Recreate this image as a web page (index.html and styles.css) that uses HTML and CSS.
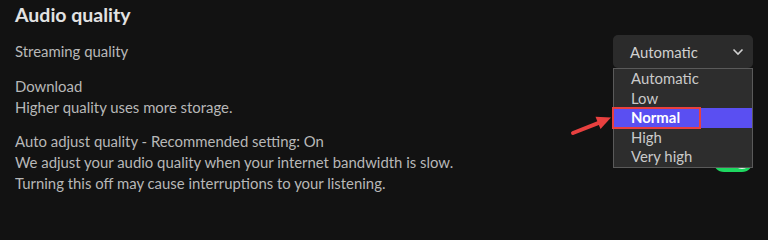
FILE: index.html
```html
<!DOCTYPE html>
<html>
<head>
<meta charset="utf-8">
<link rel="stylesheet" href="styles.css">
</head>
<body>
<div class="page">
  <h2 class="title">Audio quality</h2>
  <div class="row row-stream">
    <div class="label">Streaming quality</div>
    <div class="select-wrap">
      <div class="select">
        <span>Automatic</span>
        <svg class="chev" width="12" height="8" viewBox="0 0 12 8"><path d="M1.5 1.5 L6 6 L10.5 1.5" fill="none" stroke="#d0d0d0" stroke-width="1.6"/></svg>
      </div>
      <ul class="list">
        <li>Automatic</li>
        <li>Low</li>
        <li class="sel">Normal</li>
        <li>High</li>
        <li>Very high</li>
      </ul>
      <div class="redbox"></div>
      <svg class="arrow" width="50" height="32" viewBox="0 0 50 32">
        <path d="M8 28 L35 17.3" stroke="#e8403f" stroke-width="4" stroke-linecap="round" fill="none"/>
        <path d="M46 12.5 L30.5 11.8 L35.5 24 Z" fill="#e8403f"/>
      </svg>
    </div>
  </div>
  <div class="block block-dl">
    <div class="label">Download</div>
    <div class="label">Higher quality uses more storage.</div>
  </div>
  <div class="row row-auto">
    <div class="block">
      <div class="label">Auto adjust quality - Recommended setting: On</div>
      <div class="label">We adjust your audio quality when your internet bandwidth is slow.</div>
      <div class="label">Turning this off may cause interruptions to your listening.</div>
    </div>
    <div class="toggle"><span class="knob"></span></div>
  </div>
</div>
</body>
</html>
```
FILE: styles.css
```css
html, body {
  margin: 0;
  padding: 0;
  background: #121212;
  width: 768px;
  height: 201px;
  overflow: hidden;
}
.page {
  padding: 3px 15px 0 15px;
  font-family: "Lato", "Liberation Sans", sans-serif;
  color: #b8b8b8;
}
.title {
  margin: 0;
  font-size: 19.5px;
  line-height: 24px;
  font-weight: 700;
  color: #e2e2e2;
}
.label {
  font-size: 14.9px;
  line-height: 21px;
}
.row {
  display: flex;
  justify-content: space-between;
  align-items: center;
}
.row-stream {
  margin-top: 8px;
  height: 33px;
}
.select-wrap {
  position: relative;
  width: 140px;
  height: 33px;
}
.select {
  box-sizing: border-box;
  height: 33px;
  background: #2b2b2b;
  border-radius: 5px;
  display: flex;
  align-items: center;
  justify-content: space-between;
  padding: 0 9px 0 17px;
  font-size: 14.9px;
  color: #d0d0d0;
}
.list {
  position: absolute;
  left: 0;
  top: 33px;
  width: 140px;
  box-sizing: border-box;
  margin: 0;
  padding: 0;
  list-style: none;
  background: #2d2d2d;
  border: 1px solid #5a5a5a;
  z-index: 2;
}
.list li {
  height: 19.5px;
  line-height: 19.5px;
  padding-left: 17px;
  font-size: 14.9px;
  color: #cacaca;
}
.list li.sel {
  background: #5a4ff2;
  color: #ffffff;
  font-weight: 700;
}
.redbox {
  position: absolute;
  left: -1px;
  top: 72px;
  width: 89px;
  height: 22px;
  box-sizing: border-box;
  border: 2.5px solid #e8403f;
  z-index: 3;
}
.arrow {
  position: absolute;
  left: -48px;
  top: 70px;
  z-index: 3;
}
.block-dl {
  margin-top: 8px;
}
.row-auto {
  margin-top: 13px;
  align-items: center;
}
.toggle {
  position: relative;
  width: 40px;
  height: 22px;
  border-radius: 11px;
  background: #1ed760;
  margin-top: -4px;
}
.knob {
  position: absolute;
  right: 3px;
  top: 3px;
  width: 16px;
  height: 16px;
  border-radius: 50%;
  background: #f0f0f0;
}
```
